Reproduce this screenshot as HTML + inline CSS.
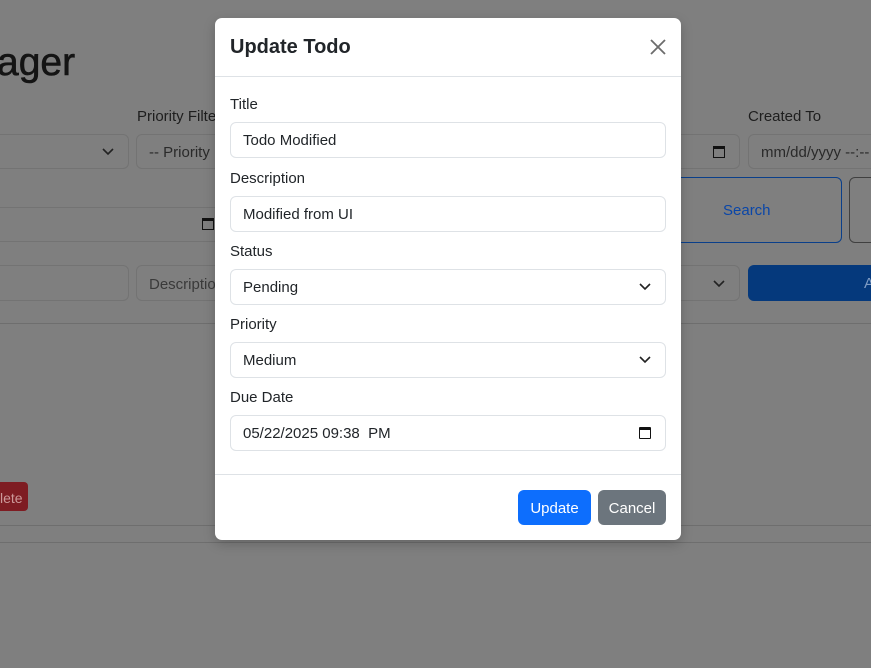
<!DOCTYPE html>
<html><head><meta charset="utf-8"><style>
*{box-sizing:border-box;margin:0;padding:0}
body{width:871px;height:668px;overflow:hidden;background:#7f7f7f;font-family:"Liberation Sans",sans-serif;color:#212529;position:relative}
.a{position:absolute}
.bg{border:1px solid #737373;border-radius:6px;color:#2a2a2a;font-size:15px;padding-left:12px;display:flex;align-items:center}
.lbl{font-size:15px;color:#1e1e1e}
.m{position:absolute;left:215px;top:18px;width:466px;height:522px;background:#fff;border-radius:7px;box-shadow:0 4px 12px rgba(0,0,0,.2)}
.ml{position:absolute;left:15px;font-size:15px;color:#212529}
.in{position:absolute;left:15px;width:436px;height:36px;border:1px solid #dee2e6;border-radius:6px;font-size:15px;padding:1px 0 0 12px;display:flex;align-items:center;color:#212529}
.chev{position:absolute;right:14px;top:13px}
.cal{position:absolute;right:14px;top:11px;width:12px;height:12px;border:1.5px solid #111;border-top-width:3px;border-radius:1px}
</style></head><body>
<div class="a" style="left:-3px;top:41px;font-size:39px;color:#141414;-webkit-text-stroke:0.6px #141414">ager</div>
<div class="a lbl" style="left:137px;top:108px">Priority Filter</div>
<div class="a lbl" style="left:748px;top:108px">Created To</div>
<div class="a bg" style="left:-10px;top:134px;width:139px;height:35px"><svg style="position:absolute;right:14px;top:13px" width="12" height="8"><path d="M1 1l5 5 5-5" fill="none" stroke="#222" stroke-width="1.6"/></svg></div>
<div class="a bg" style="left:136px;top:134px;width:100px;height:35px;padding-top:2px">-- Priority</div>
<div class="a bg" style="left:640px;top:134px;width:100px;height:35px"><span style="position:absolute;right:14px;top:11px;width:12px;height:12px;border:1.5px solid #111;border-top-width:3px"></span></div>
<div class="a bg" style="left:748px;top:134px;width:140px;height:35px;padding-top:2px">mm/dd/yyyy --:--</div>
<div class="a bg" style="left:-10px;top:207px;width:230px;height:35px"><span style="position:absolute;right:5px;top:10px;width:12px;height:12px;border:1.5px solid #111;border-top-width:3px"></span></div>
<div class="a" style="left:640px;top:177px;width:202px;height:66px;border:1px solid #0a3f8a;border-radius:6px;color:#0a46a8;font-size:15px;padding:24px 0 0 82px">Search</div>
<div class="a" style="left:849px;top:177px;width:40px;height:66px;border:1px solid #404040;border-radius:6px"></div>
<div class="a bg" style="left:-10px;top:265px;width:139px;height:36px"></div>
<div class="a bg" style="left:136px;top:265px;width:100px;height:36px;color:#3a3a3a;padding-top:2px">Description</div>
<div class="a bg" style="left:640px;top:265px;width:100px;height:36px"><svg style="position:absolute;right:14px;top:14px" width="12" height="8"><path d="M1 1l5 5 5-5" fill="none" stroke="#222" stroke-width="1.6"/></svg></div>
<div class="a" style="left:748px;top:265px;width:140px;height:36px;background:#05397c;border-radius:6px;color:#7f9cc4;font-size:15px;padding:10px 0 0 116px">A</div>
<div class="a" style="left:0;top:323px;width:871px;height:1px;background:#6e6e6e"></div>
<div class="a" style="left:-10px;top:482px;width:38px;height:29px;background:#7e1c22;border-radius:4px;color:#c99;font-size:14px;padding:8px 0 0 10px">lete</div>
<div class="a" style="left:0;top:525px;width:871px;height:1px;background:#6e6e6e"></div>
<div class="a" style="left:0;top:542px;width:871px;height:1px;background:#6e6e6e"></div>

<div class="m">
<div class="a" style="left:15px;top:18px;font-size:20px;font-weight:600;color:#212529">Update Todo</div>
<svg class="a" style="left:435px;top:21px" width="16" height="16"><path d="M1 1L15 15M15 1L1 15" stroke="#6c6c6c" stroke-width="1.8"/></svg>
<div class="a" style="left:0;top:58px;width:466px;height:1px;background:#dee2e6"></div>
<div class="ml" style="top:78px">Title</div>
<div class="in" style="top:104px">Todo Modified</div>
<div class="ml" style="top:152px">Description</div>
<div class="in" style="top:178px">Modified from UI</div>
<div class="ml" style="top:225px">Status</div>
<div class="in" style="top:251px">Pending<svg class="chev" width="12" height="8"><path d="M1 1l5 5 5-5" fill="none" stroke="#222" stroke-width="1.6"/></svg></div>
<div class="ml" style="top:298px">Priority</div>
<div class="in" style="top:324px">Medium<svg class="chev" width="12" height="8"><path d="M1 1l5 5 5-5" fill="none" stroke="#222" stroke-width="1.6"/></svg></div>
<div class="ml" style="top:371px">Due Date</div>
<div class="in" style="top:397px;padding-left:12px">05/22/2025 09:38&nbsp; PM<span class="cal"></span></div>
<div class="a" style="left:0;top:456px;width:466px;height:1px;background:#dee2e6"></div>
<div class="a" style="left:303px;top:472px;width:73px;height:35px;background:#0d6efd;border-radius:6px;color:#fff;font-size:15px;padding-top:1px;display:flex;align-items:center;justify-content:center">Update</div>
<div class="a" style="left:383px;top:472px;width:68px;height:35px;background:#6c757d;border-radius:6px;color:#fff;font-size:15px;padding-top:1px;display:flex;align-items:center;justify-content:center">Cancel</div>
</div>
</body></html>
